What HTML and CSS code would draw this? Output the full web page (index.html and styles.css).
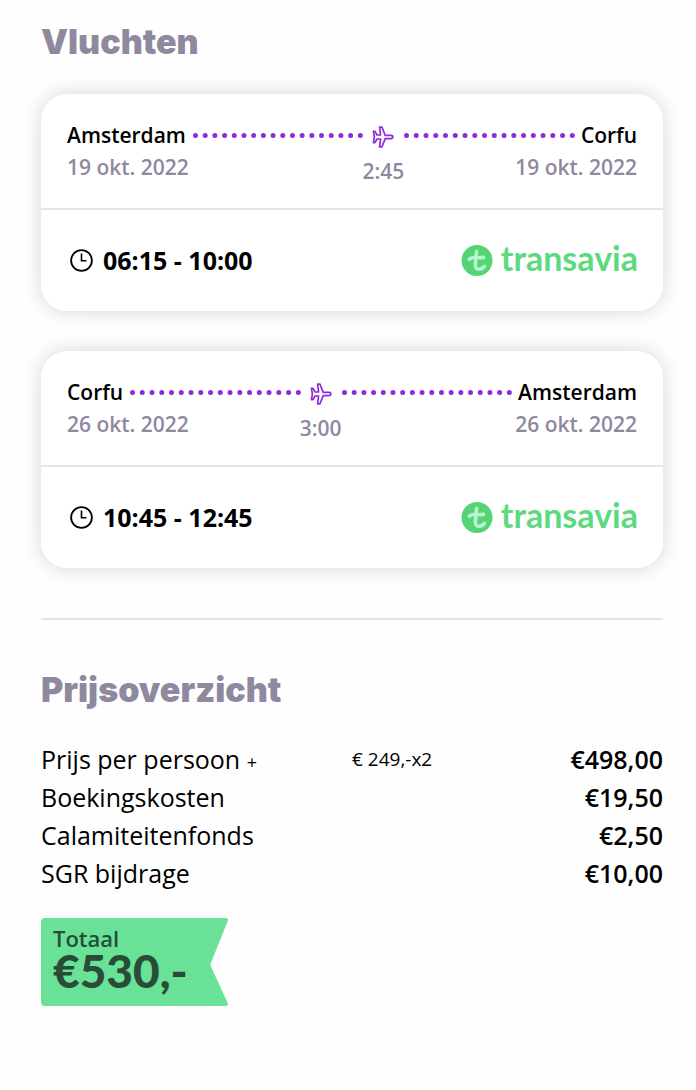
FILE: index.html
```html
<!DOCTYPE html>
<html lang="nl">
<head>
    <meta charset="UTF-8">
    <meta name="viewport" content="width=device-width, initial-scale=1.0">
    <title>Vluchten en prijsoverzicht</title>
    <link rel="stylesheet" href="styles.css">
</head>
<body>
    <!-- shared icons -->
    <svg class="sprite" aria-hidden="true">
        <symbol id="icon-plane" viewBox="0 0 22 22">
            <path d="M1.4 5.4H3L5 9H8.6L7.6 1.2H10L13.2 9.4H19C20.2 9.4 20.8 10.2 20.8 11S20.2 12.6 19 12.6H13.2L10 20.8H7.6L8.6 13H5L3 16.6H1.4L2.4 11Z" fill="none" stroke="currentColor" stroke-width="1.7" stroke-linejoin="round"/>
        </symbol>
        <symbol id="icon-clock" viewBox="0 0 24 24">
            <circle cx="12.5" cy="11.5" r="10.4" fill="none" stroke="currentColor" stroke-width="1.8"/>
            <path d="M12.5 4.5V11.8H17.5" fill="none" stroke="currentColor" stroke-width="1.6"/>
        </symbol>
        <symbol id="icon-transavia" viewBox="0 0 32 32">
            <circle cx="16" cy="15.5" r="15.5" fill="#55d476"/>
            <path d="M15.6 6.5L14.4 19Q14 24.4 18 24.2Q21.4 24 23.4 21.4M8.4 14.2Q11 12.2 14 12.6T22.6 12.4" fill="none" stroke="#b8f4cd" stroke-width="3.6" stroke-linecap="round"/>
        </symbol>
    </svg>

    <main>
        <section>
            <h2>Vluchten</h2>

            <article class="flight">
                <div class="route">
                    <div class="stop">
                        <span class="city">Amsterdam</span>
                        <span class="date">19 okt. 2022</span>
                    </div>
                    <span class="dots"></span>
                    <div class="duration">
                        <svg class="plane"><use href="#icon-plane"/></svg>
                        <span>2:45</span>
                    </div>
                    <span class="dots"></span>
                    <div class="stop end">
                        <span class="city">Corfu</span>
                        <span class="date">19 okt. 2022</span>
                    </div>
                </div>
                <div class="details">
                    <div class="time">
                        <svg class="clock"><use href="#icon-clock"/></svg>
                        <span>06:15 - 10:00</span>
                    </div>
                    <div class="airline">
                        <svg><use href="#icon-transavia"/></svg>
                        <span>transavia</span>
                    </div>
                </div>
            </article>

            <article class="flight">
                <div class="route">
                    <div class="stop">
                        <span class="city">Corfu</span>
                        <span class="date">26 okt. 2022</span>
                    </div>
                    <span class="dots"></span>
                    <div class="duration">
                        <svg class="plane"><use href="#icon-plane"/></svg>
                        <span>3:00</span>
                    </div>
                    <span class="dots"></span>
                    <div class="stop end">
                        <span class="city">Amsterdam</span>
                        <span class="date">26 okt. 2022</span>
                    </div>
                </div>
                <div class="details">
                    <div class="time">
                        <svg class="clock"><use href="#icon-clock"/></svg>
                        <span>10:45 - 12:45</span>
                    </div>
                    <div class="airline">
                        <svg><use href="#icon-transavia"/></svg>
                        <span>transavia</span>
                    </div>
                </div>
            </article>
        </section>

        <hr>

        <section>
            <h2>Prijsoverzicht</h2>
            <table class="prices">
                <tr>
                    <th scope="row">Prijs per persoon <small>+</small></th>
                    <td class="unit">€ 249,-x2</td>
                    <td class="amount">€498,00</td>
                </tr>
                <tr>
                    <th scope="row">Boekingskosten</th>
                    <td></td>
                    <td class="amount">€19,50</td>
                </tr>
                <tr>
                    <th scope="row">Calamiteitenfonds</th>
                    <td></td>
                    <td class="amount">€2,50</td>
                </tr>
                <tr>
                    <th scope="row">SGR bijdrage</th>
                    <td></td>
                    <td class="amount">€10,00</td>
                </tr>
            </table>
            <div class="total">
                <span>Totaal</span>
                <strong>€530,-</strong>
            </div>
        </section>
    </main>
</body>
</html>
```
FILE: styles.css
```css
* {
    box-sizing: border-box;
}

body {
    margin: 0;
    background: #fefefe;
    color: #000;
    font-family: "Open Sans", sans-serif;
}

main {
    padding: 20px 33px 40px 41px;
}

.sprite {
    position: absolute;
    width: 0;
    height: 0;
}

h2 {
    margin: 0 0 28px;
    color: #8e899f;
    font-family: Inter, sans-serif;
    font-size: 34px;
    font-weight: 900;
    line-height: 44px;
}

.flight {
    margin: 30px 0 40px;
    background: #fff;
    border-radius: 26px;
    box-shadow: 0 0 20px rgba(0, 0, 0, 0.16);
}

.route {
    display: flex;
    padding: 25px 26px;
    border-bottom: 2px solid #e4e4e4;
    font-size: 21px;
    font-weight: 600;
    line-height: 32px;
}

.stop {
    display: flex;
    flex-direction: column;
}

/* the date may run past the city name, under the dots */
.date {
    display: flex;
    width: 0;
    white-space: nowrap;
    color: #8e899f;
}

.stop.end {
    align-items: flex-end;
}

.end .date {
    justify-content: flex-end;
}

.dots {
    flex: 1;
    height: 5px;
    margin: 14px 6px 0 7px;
    border-top: 5px dotted #8f2bd9;
}

.duration {
    display: flex;
    flex-direction: column;
    align-items: center;
    width: 28px;
    height: 64px;
    color: #8e899f;
    white-space: nowrap;
}

.plane {
    width: 22px;
    height: 22px;
    margin: 7px 0;
    color: #8f2bd9;
    flex-shrink: 0;
}

.details {
    display: flex;
    justify-content: space-between;
    align-items: center;
    padding: 32px 25px 32px 28px;
}

.time {
    display: flex;
    align-items: center;
    gap: 10px;
    font-size: 25px;
    font-weight: 700;
    line-height: 37px;
}

.clock {
    width: 24px;
    height: 24px;
}

.airline {
    display: flex;
    align-items: center;
    gap: 8px;
    color: #5dd982;
    font-family: Lato, sans-serif;
    font-size: 34px;
    font-weight: 700;
    line-height: 32px;
}

.airline span {
    padding-bottom: 5px;
}

.airline svg {
    width: 32px;
    height: 32px;
}

hr {
    margin: 50px 0 48px;
    border: 0;
    border-top: 2px solid #e4e4e4;
}

.prices {
    width: 100%;
    border-collapse: collapse;
    font-size: 25px;
    line-height: 38px;
}

.prices th,
.prices td {
    padding: 0;
    text-align: left;
    font-weight: 400;
}

.prices th {
    width: 50%;
}

.prices small {
    font-size: 18px;
    line-height: 20px;
}

.prices .unit {
    font-size: 19px;
}

.prices .amount {
    text-align: right;
    font-weight: 600;
}

.total {
    display: flex;
    flex-direction: column;
    width: 188px;
    height: 88px;
    margin-top: 26px;
    padding: 5px 12px;
    background: #69e297;
    border-radius: 4px;
    clip-path: polygon(0 0, 100% 0, 90% 53%, 100% 100%, 0 100%);
    color: #284c38;
    font-size: 22px;
    font-weight: 600;
    line-height: 30px;
}

.total strong {
    font-family: Lato, sans-serif;
    font-size: 46px;
    font-weight: 900;
    line-height: 36px;
}
```
